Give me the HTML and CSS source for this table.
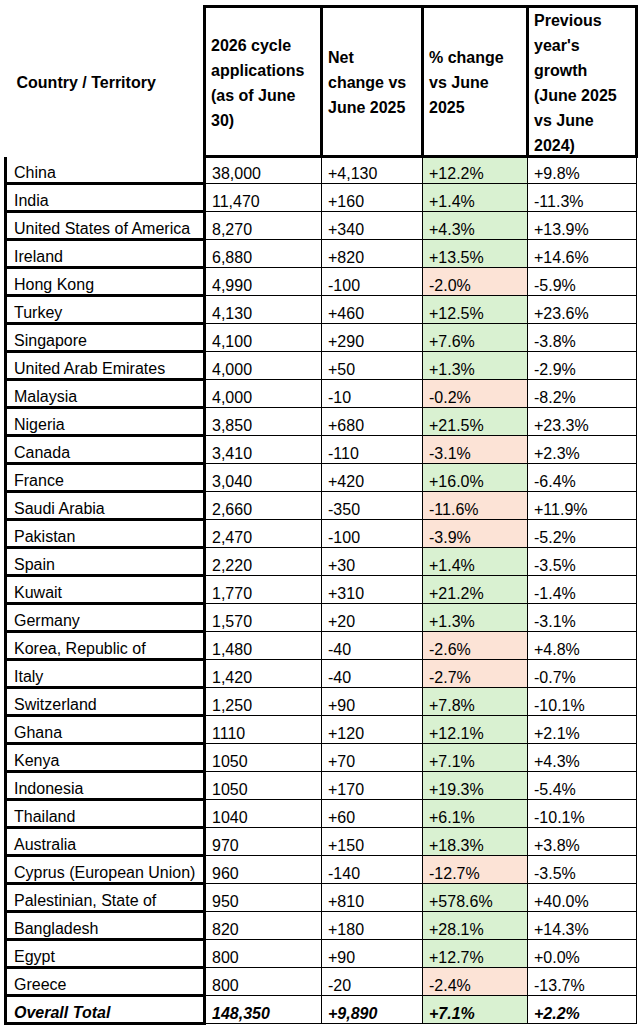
FILE: index.html
```html
<!DOCTYPE html>
<html lang="en">
<head>
<meta charset="utf-8">
<title>2026 cycle applications by country</title>
<link rel="stylesheet" href="styles.css">
</head>
<body>
<table class="grid">
<colgroup>
<col class="c1"><col class="c2"><col class="c3"><col class="c4"><col class="c5">
</colgroup>
<thead>
<tr>
<th class="first"><span class="lines">Country / Territory</span></th>
<th><span class="lines">2026 cycle<br>applications<br>(as of June<br>30)</span></th>
<th><span class="lines">Net<br>change vs<br>June 2025</span></th>
<th><span class="lines">% change<br>vs June<br>2025</span></th>
<th><span class="lines tall">Previous<br>year's<br>growth<br>(June 2025<br>vs June<br>2024)</span></th>
</tr>
</thead>
<tbody>
<tr class="top"><td class="first">China</td><td>38,000</td><td>+4,130</td><td class="up">+12.2%</td><td>+9.8%</td></tr>
<tr><td class="first">India</td><td>11,470</td><td>+160</td><td class="up">+1.4%</td><td>-11.3%</td></tr>
<tr><td class="first">United States of America</td><td>8,270</td><td>+340</td><td class="up">+4.3%</td><td>+13.9%</td></tr>
<tr><td class="first">Ireland</td><td>6,880</td><td>+820</td><td class="up">+13.5%</td><td>+14.6%</td></tr>
<tr><td class="first">Hong Kong</td><td>4,990</td><td>-100</td><td class="down">-2.0%</td><td>-5.9%</td></tr>
<tr><td class="first">Turkey</td><td>4,130</td><td>+460</td><td class="up">+12.5%</td><td>+23.6%</td></tr>
<tr><td class="first">Singapore</td><td>4,100</td><td>+290</td><td class="up">+7.6%</td><td>-3.8%</td></tr>
<tr><td class="first">United Arab Emirates</td><td>4,000</td><td>+50</td><td class="up">+1.3%</td><td>-2.9%</td></tr>
<tr><td class="first">Malaysia</td><td>4,000</td><td>-10</td><td class="down">-0.2%</td><td>-8.2%</td></tr>
<tr><td class="first">Nigeria</td><td>3,850</td><td>+680</td><td class="up">+21.5%</td><td>+23.3%</td></tr>
<tr><td class="first">Canada</td><td>3,410</td><td>-110</td><td class="down">-3.1%</td><td>+2.3%</td></tr>
<tr><td class="first">France</td><td>3,040</td><td>+420</td><td class="up">+16.0%</td><td>-6.4%</td></tr>
<tr><td class="first">Saudi Arabia</td><td>2,660</td><td>-350</td><td class="down">-11.6%</td><td>+11.9%</td></tr>
<tr><td class="first">Pakistan</td><td>2,470</td><td>-100</td><td class="down">-3.9%</td><td>-5.2%</td></tr>
<tr><td class="first">Spain</td><td>2,220</td><td>+30</td><td class="up">+1.4%</td><td>-3.5%</td></tr>
<tr><td class="first">Kuwait</td><td>1,770</td><td>+310</td><td class="up">+21.2%</td><td>-1.4%</td></tr>
<tr><td class="first">Germany</td><td>1,570</td><td>+20</td><td class="up">+1.3%</td><td>-3.1%</td></tr>
<tr><td class="first">Korea, Republic of</td><td>1,480</td><td>-40</td><td class="down">-2.6%</td><td>+4.8%</td></tr>
<tr><td class="first">Italy</td><td>1,420</td><td>-40</td><td class="down">-2.7%</td><td>-0.7%</td></tr>
<tr><td class="first">Switzerland</td><td>1,250</td><td>+90</td><td class="up">+7.8%</td><td>-10.1%</td></tr>
<tr><td class="first">Ghana</td><td>1110</td><td>+120</td><td class="up">+12.1%</td><td>+2.1%</td></tr>
<tr><td class="first">Kenya</td><td>1050</td><td>+70</td><td class="up">+7.1%</td><td>+4.3%</td></tr>
<tr><td class="first">Indonesia</td><td>1050</td><td>+170</td><td class="up">+19.3%</td><td>-5.4%</td></tr>
<tr><td class="first">Thailand</td><td>1040</td><td>+60</td><td class="up">+6.1%</td><td>-10.1%</td></tr>
<tr><td class="first">Australia</td><td>970</td><td>+150</td><td class="up">+18.3%</td><td>+3.8%</td></tr>
<tr><td class="first">Cyprus (European Union)</td><td>960</td><td>-140</td><td class="down">-12.7%</td><td>-3.5%</td></tr>
<tr><td class="first">Palestinian, State of</td><td>950</td><td>+810</td><td class="up">+578.6%</td><td>+40.0%</td></tr>
<tr><td class="first">Bangladesh</td><td>820</td><td>+180</td><td class="up">+28.1%</td><td>+14.3%</td></tr>
<tr><td class="first">Egypt</td><td>800</td><td>+90</td><td class="up">+12.7%</td><td>+0.0%</td></tr>
<tr><td class="first">Greece</td><td>800</td><td>-20</td><td class="down">-2.4%</td><td>-13.7%</td></tr>
<tr class="total"><td class="first">Overall Total</td><td>148,350</td><td>+9,890</td><td class="up">+7.1%</td><td>+2.2%</td></tr>
</tbody>
</table>
</body>
</html>
```

FILE: styles.css
```css
html, body {
  margin: 0;
  padding: 0;
  background: #ffffff;
}

body {
  font-family: Arial, "Liberation Sans", sans-serif;
  color: #000000;
}

.grid {
  border-collapse: collapse;
  table-layout: fixed;
  margin: 5px 0 0 4px;
  width: 631px;
}

.c1 { width: 199px; }
.c2 { width: 117px; }
.c3 { width: 101px; }
.c4 { width: 105px; }
.c5 { width: 109px; }

.grid th {
  height: 145px;
  padding: 2px 6px 0 5px;
  font-size: 16px;
  font-weight: bold;
  line-height: 25px;
  text-align: left;
  vertical-align: middle;
  white-space: nowrap;
  border: 3px solid #000000;
}

.lines {
  display: block;
}

.lines.tall {
  margin: -2.5px 0 -2.5px;
}

.grid th.first {
  border-top: none;
  border-left: none;
  border-bottom: none;
  padding-left: 11px;
}

.grid td {
  height: 25px;
  padding: 0 6px 0 6px;
  font-size: 16px;
  line-height: 18px;
  text-align: left;
  vertical-align: bottom;
  white-space: nowrap;
  border: 1px solid #000000;
}

.grid td.first {
  border: 3px solid #000000;
  padding-left: 7px;
}

.grid tr.top td.first {
  border-top: none;
}

.grid td.up {
  background: #d9f1d1;
}

.grid td.down {
  background: #fce3d6;
}

.grid tr.total td {
  font-weight: bold;
  font-style: italic;
}
```
